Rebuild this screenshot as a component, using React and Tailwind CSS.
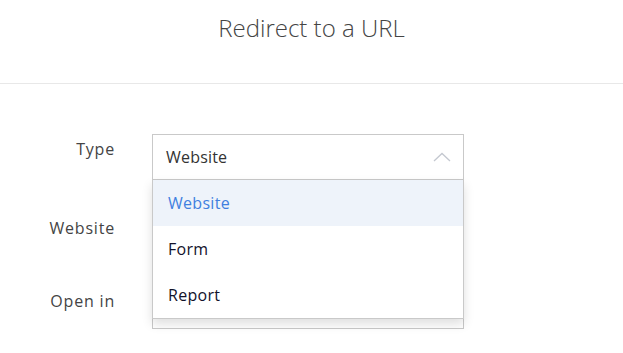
import { useState } from "react";

const OPTIONS = ["Website", "Form", "Report"];

function Field({ label, labelPad, children }) {
  return (
    <div className="flex items-start">
      <label className={`w-[115px] shrink-0 text-right text-[16px] leading-[22px] tracking-[0.8px] text-[#444] ${labelPad}`}>{label}</label>
      <div className="ml-[37px] w-[312px]">{children}</div>
    </div>
  );
}

export default function App() {
  const [value, setValue] = useState("Website");
  const [open, setOpen] = useState(true);

  return (
    <div className="h-[353px] w-full overflow-hidden bg-white font-['Open_Sans','Liberation_Sans',sans-serif]">
      <header className="flex h-[84px] items-start justify-center border-b border-[#e8e8e8] pt-[12px]">
        <h1 className="text-[24px] font-light leading-[32px] text-[#444]">Redirect to a URL</h1>
      </header>

      <form className="flex flex-col gap-[28px] pt-[50px]">
        <Field label="Type" labelPad="pt-[4px]">
          <div className="relative">
            <button
              type="button"
              onClick={() => setOpen((o) => !o)}
              className="flex h-[46px] w-full items-center justify-between border border-[#c9c9c9] bg-white pl-[13px] pr-[12px] text-left text-[16px] tracking-[0.2px] text-[#333]"
            >
              {value}
              <svg width="18" height="10" viewBox="0 0 18 10" fill="none" className={open ? "" : "rotate-180"}>
                <path d="M1 9 L9 1.5 L17 9" stroke="#c4c8d0" strokeWidth="1.3" />
              </svg>
            </button>
            {open ? (
              <ul className="absolute left-0 top-[46px] z-10 w-full border-x border-b border-[#c9c9c9] bg-white shadow-[0_5px_10px_rgba(0,0,0,0.13)]">
                {OPTIONS.map((opt) => (
                  <li
                    key={opt}
                    onClick={() => {
                      setValue(opt);
                      setOpen(false);
                    }}
                    className={`flex h-[46px] cursor-pointer items-center pl-[15px] text-[16px] tracking-[0.3px] ${
                      opt === value ? "bg-[#eef3fa] text-[#3f80e0]" : "text-[#12122a]"
                    }`}
                  >
                    {opt}
                  </li>
                ))}
              </ul>
            ) : null}
          </div>
        </Field>

        <Field label="Website" labelPad="pt-[9px]">
          <input className="h-[46px] w-full border border-[#c9c9c9] px-[13px] text-[16px] outline-none" />
        </Field>

        <Field label="Open in" labelPad="pt-[8px]">
          <div className="h-[47px] w-full border border-[#c9c9c9] bg-white" />
        </Field>
      </form>
    </div>
  );
}
